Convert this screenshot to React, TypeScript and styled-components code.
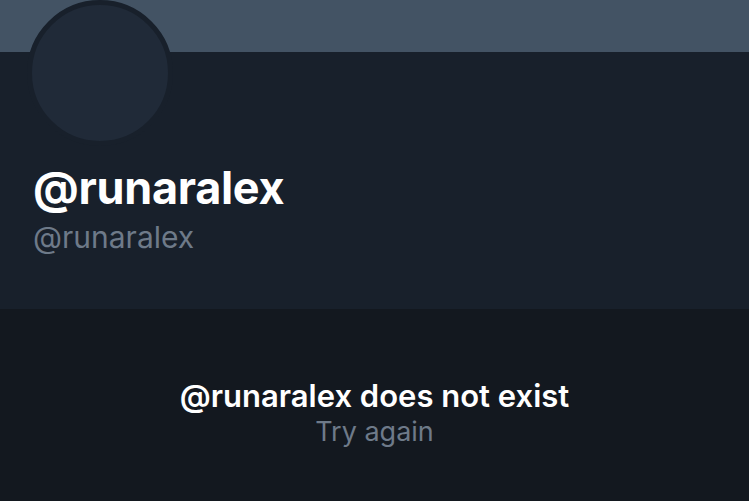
import React from 'react';
import styled, { createGlobalStyle } from 'styled-components';

const GlobalStyle = createGlobalStyle`
  html, body {
    margin: 0;
    padding: 0;
    background: #13181f;
    font-family: Inter, "Liberation Sans", sans-serif;
  }
`;

const Page = styled.div`
  display: flex;
  flex-direction: column;
  width: 749px;
  height: 501px;
  overflow: hidden;
  background: #13181f;
`;

const Banner = styled.div`
  height: 52px;
  background: #435364;
`;

const Profile = styled.div`
  display: flex;
  flex-direction: column;
  height: 257px;
  padding: 0 33px;
  background: #18202b;
`;

const Avatar = styled.div`
  width: 136px;
  height: 136px;
  margin: -52px 0 0 -6px;
  border: 5px solid #18202b;
  border-radius: 50%;
  background: #202a38;
`;

const DisplayName = styled.h1`
  margin: 17px 0 0;
  color: #ffffff;
  font-size: 45px;
  font-weight: 700;
  line-height: 50px;
  letter-spacing: -0.3px;
`;

const Handle = styled.div`
  margin-top: 5px;
  color: #6e7a89;
  font-size: 30px;
  line-height: 38px;
`;

const Empty = styled.div`
  display: flex;
  flex-direction: column;
  align-items: center;
  padding-top: 68px;
`;

const EmptyTitle = styled.div`
  color: #ffffff;
  font-size: 31px;
  font-weight: 600;
  line-height: 38px;
`;

const EmptyAction = styled.div`
  color: #6e7a89;
  font-size: 27px;
  line-height: 34px;
`;

const App: React.FC = () => {
  const username = 'runaralex';
  return (
    <>
      <GlobalStyle />
      <Page>
        <Banner />
        <Profile>
          <Avatar />
          <DisplayName>@{username}</DisplayName>
          <Handle>@{username}</Handle>
        </Profile>
        <Empty>
          <EmptyTitle>@{username} does not exist</EmptyTitle>
          <EmptyAction>Try again</EmptyAction>
        </Empty>
      </Page>
    </>
  );
};

export default App;
